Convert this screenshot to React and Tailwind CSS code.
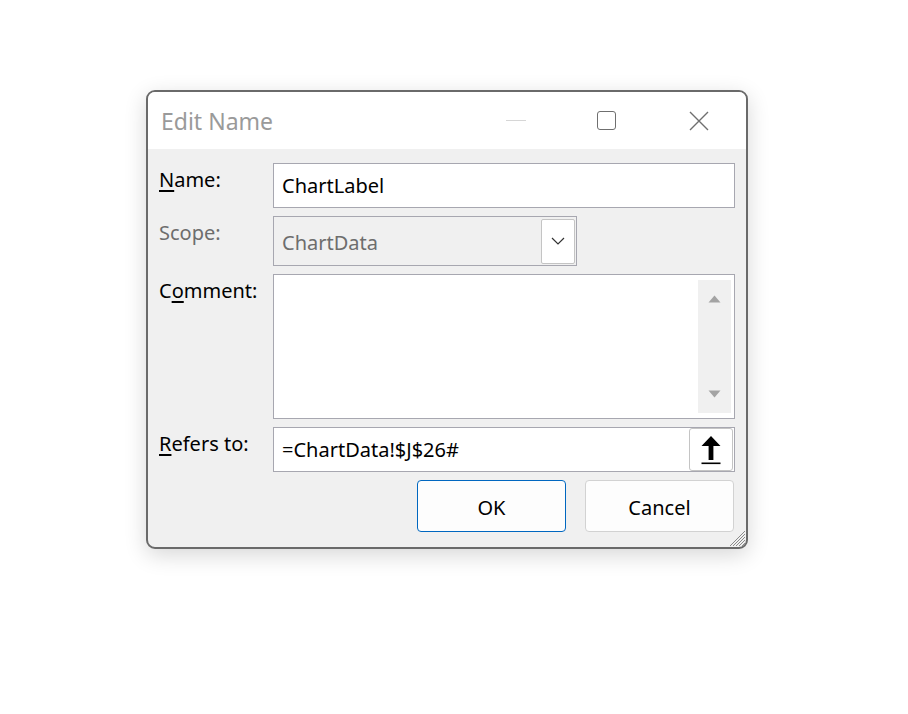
import React, { useState } from 'react';

const font = { fontFamily: '"Noto Sans", "Open Sans", sans-serif' };

const Label = ({ children, muted = false }) => (
  <div className={`pt-[5px] text-[20px] leading-[24px] ${muted ? 'text-[#6d6d6d]' : 'text-black'}`}>{children}</div>
);

export default function App() {
  const [name, setName] = useState('ChartLabel');
  const [refersTo, setRefersTo] = useState('=ChartData!$J$26#');

  return (
    <div className="w-[908px] h-[714px] bg-white pt-[90px] pl-[146px]" style={font}>
      <div className="relative w-[602px] h-[459px] rounded-[9px] border-2 border-[#6a6a6a] bg-[#f0f0f0] overflow-hidden shadow-[0_6px_22px_rgba(0,0,0,0.16)] flex flex-col">
        {/* title bar */}
        <div className="h-[57px] bg-white flex items-center pl-[13px]">
          <div className="text-[23px] text-[#9a9a9a] flex-1 pt-[2px]">Edit Name</div>
          <div className="w-[20px] h-[1.5px] bg-[#d6d6d6] mr-[71px]" />
          <div className="w-[19px] h-[19px] rounded-[3px] border-[1.5px] border-[#6f6f6f] mr-[73px]" />
          <svg width="20" height="20" viewBox="0 0 20 20" className="mr-[37px]">
            <path d="M1 1 L19 19 M19 1 L1 19" stroke="#6f6f6f" strokeWidth="1.4" />
          </svg>
        </div>

        {/* body */}
        <div className="grid grid-cols-[114px_462px] gap-y-[8px] pl-[11px] pt-[14px]">
          <Label><span className="underline underline-offset-[3px]">N</span>ame:</Label>
          <input
            value={name}
            onChange={(e) => setName(e.target.value)}
            className="h-[45px] w-[462px] bg-white border border-[#a7a7b0] px-[8px] text-[20px] text-black outline-none"
          />

          <Label muted>Scope:</Label>
          <div className="h-[50px] w-[304px] border border-[#a7a7b0] bg-[#f0f0f0] flex items-center pl-[8px] pr-[1px]">
            <span className="flex-1 text-[20px] text-[#6d6d6d] pt-[3px]">ChartData</span>
            <div className="w-[34px] h-[45px] bg-white border border-[#c4c4c4] rounded-[2px] flex items-center justify-center">
              <svg width="14" height="8" viewBox="0 0 14 8">
                <path d="M1 1 L7 7 L13 1" stroke="#333" strokeWidth="1.2" fill="none" />
              </svg>
            </div>
          </div>

          <Label>C<span className="underline underline-offset-[3px]">o</span>mment:</Label>
          <div className="h-[145px] w-[462px] bg-white border border-[#a7a7b0] flex justify-end pt-[5px] pb-[5px] pr-[3px]">
            <div className="w-[33px] h-full bg-[#f0f0f0] flex flex-col items-center justify-between py-[15px]">
              <svg width="13" height="8" viewBox="0 0 13 8"><path d="M6.5 0.5 L12.5 7.5 L0.5 7.5 Z" fill="#a3a3a3" /></svg>
              <svg width="13" height="8" viewBox="0 0 13 8"><path d="M0.5 0.5 L12.5 0.5 L6.5 7.5 Z" fill="#a3a3a3" /></svg>
            </div>
          </div>

          <Label><span className="underline underline-offset-[3px]">R</span>efers to:</Label>
          <div className="h-[45px] w-[462px] bg-white border border-[#a7a7b0] flex items-center pl-[8px] pr-[1px]">
            <input
              value={refersTo}
              onChange={(e) => setRefersTo(e.target.value)}
              className="flex-1 min-w-0 text-[20px] text-black outline-none bg-transparent pt-[1px]"
            />
            <button className="w-[44px] h-[43px] bg-white border border-[#c4c4c4] rounded-[3px] flex items-center justify-center">
              <svg width="22" height="30" viewBox="0 0 22 30">
                <path d="M11 1 L20.5 11 L13.4 11 L13.4 25 L8.6 25 L8.6 11 L1.5 11 Z" fill="#000" />
                <rect x="1.5" y="27.5" width="19" height="1.6" fill="#000" />
              </svg>
            </button>
          </div>
        </div>

        {/* buttons */}
        <div className="flex justify-end gap-[19px] pr-[12px] pt-[8px]">
          <button className="w-[149px] h-[52px] rounded-[4px] border border-[#0067c0] bg-[#fdfdfd] text-[20px] text-black pt-[3px]">OK</button>
          <button className="w-[149px] h-[52px] rounded-[4px] border border-[#d2d2d2] bg-[#fdfdfd] text-[20px] text-black pt-[3px]">Cancel</button>
        </div>

        {/* resize grip */}
        <svg width="20" height="20" viewBox="0 0 20 20" className="absolute right-0 bottom-0">
          <path d="M19 4 L4 19 M19 7 L7 19 M19 10 L10 19 M19 13 L13 19 M19 16 L16 19" stroke="#8a8a8a" strokeWidth="1" />
        </svg>
      </div>
    </div>
  );
}
